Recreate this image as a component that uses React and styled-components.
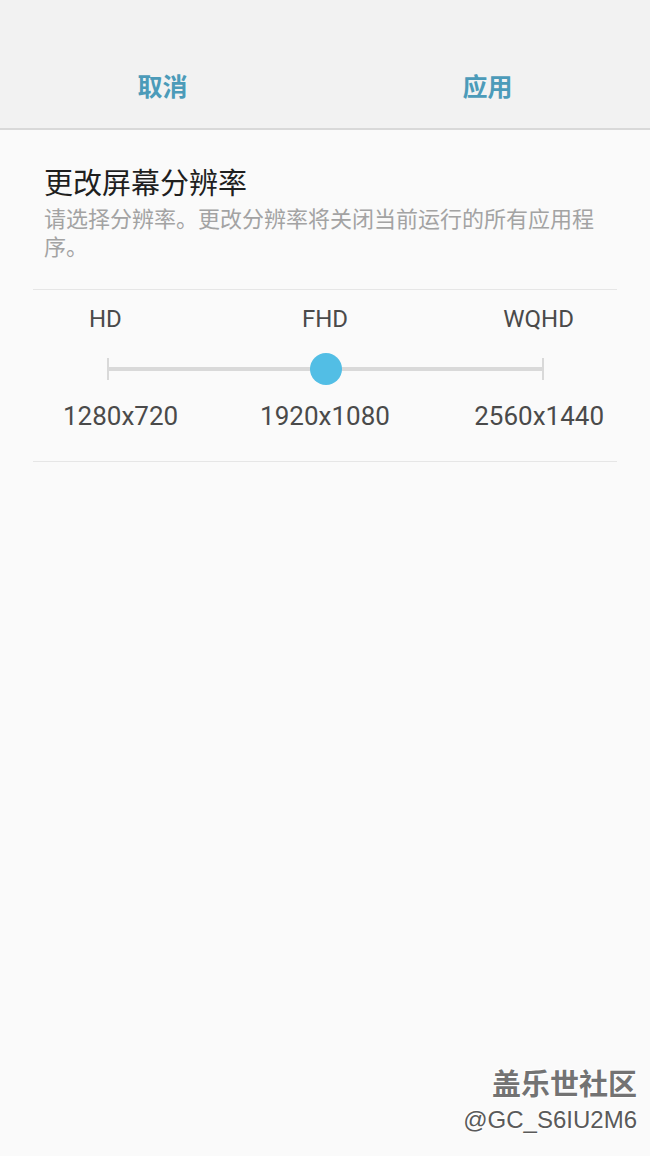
import React from 'react';
import styled, { createGlobalStyle } from 'styled-components';

const GlobalStyle = createGlobalStyle`
  html, body {
    margin: 0;
    padding: 0;
    background: #fafafa;
  }
  body {
    font-family: Roboto, "Noto Sans CJK SC", sans-serif;
  }
`;

const Page = styled.div`
  position: relative;
  width: 650px;
  min-height: 1156px;
  background: #fafafa;
  overflow: hidden;
`;

const TopBar = styled.div`
  display: grid;
  grid-template-columns: 1fr 1fr;
  align-items: end;
  height: 128px;
  background: #f2f2f2;
  border-bottom: 2px solid #d9d9d9;
`;

const BarButton = styled.button`
  border: none;
  background: none;
  padding: 0 0 28px;
  font-family: "Noto Sans CJK SC", sans-serif;
  font-size: 25px;
  font-weight: 700;
  line-height: 30px;
  color: #4c9bb9;
  cursor: pointer;
`;

const Header = styled.div`
  display: flex;
  flex-direction: column;
  padding: 34px 20px 30px 44px;
`;

const Title = styled.div`
  font-family: "Noto Sans CJK SC", sans-serif;
  font-size: 29px;
  line-height: 34px;
  color: #1f1f1f;
`;

const Subtitle = styled.div`
  margin-top: 5px;
  max-width: 565px;
  font-family: "Noto Sans CJK SC", sans-serif;
  font-size: 22px;
  line-height: 28px;
  color: #a3a3a3;
`;

const Section = styled.div`
  margin: 0 33px;
  padding: 14px 0 29px;
  border-top: 1px solid #e6e6e6;
  border-bottom: 1px solid #e6e6e6;
  display: flex;
  flex-direction: column;
`;

const Row = styled.div`
  display: grid;
  grid-template-columns: 1fr auto 1fr;
  align-items: center;
  margin-top: ${p => p.$top || 0}px;
`;

const Cell = styled.div`
  font-family: Roboto, sans-serif;
  font-size: ${p => p.$size}px;
  line-height: ${p => p.$lh}px;
  color: #4a4a4a;
  justify-self: ${p => p.$align};
  margin-left: ${p => p.$ml || 0}px;
  margin-right: ${p => p.$mr || 0}px;
`;

const SliderRow = styled.div`
  height: 40px;
  margin: 15px 73px 0 74px;
  display: flex;
  align-items: center;
`;

const Track = styled.div`
  position: relative;
  flex: 1;
  height: 4px;
  background: #d9d9d9;

  &::before,
  &::after {
    content: '';
    position: absolute;
    top: -9px;
    width: 2px;
    height: 22px;
    background: #d9d9d9;
  }
  &::before { left: 0; }
  &::after { right: 0; }
`;

const Thumb = styled.div`
  position: absolute;
  top: 50%;
  left: ${p => p.$pos}%;
  width: 32px;
  height: 32px;
  border-radius: 50%;
  background: #52bee5;
  transform: translate(-50%, -50%);
`;

const Watermark = styled.div`
  position: absolute;
  right: 13px;
  bottom: 18px;
  display: flex;
  flex-direction: column;
  align-items: flex-end;
  color: #5a5a5a;
  text-shadow: 1px 1px 0 #fff, -1px -1px 0 #fff;
`;

const MarkTitle = styled.div`
  font-family: "Noto Sans CJK SC", sans-serif;
  font-size: 29px;
  line-height: 36px;
  font-weight: 700;
  color: #737373;
`;

const MarkId = styled.div`
  font-family: "Liberation Sans", sans-serif;
  font-size: 24px;
  line-height: 36px;
  margin-top: 2px;
`;

const modes = [
  { name: 'HD', res: '1280x720' },
  { name: 'FHD', res: '1920x1080' },
  { name: 'WQHD', res: '2560x1440' },
];

export default function App() {
  const selected = 1;
  return (
    <Page>
      <GlobalStyle />
      <TopBar>
        <BarButton>取消</BarButton>
        <BarButton>应用</BarButton>
      </TopBar>
      <Header>
        <Title>更改屏幕分辨率</Title>
        <Subtitle>请选择分辨率。更改分辨率将关闭当前运行的所有应用程序。</Subtitle>
      </Header>
      <Section>
        <Row>
          <Cell $size={24} $lh={30} $align="start" $ml={56}>{modes[0].name}</Cell>
          <Cell $size={24} $lh={30} $align="center">{modes[1].name}</Cell>
          <Cell $size={24} $lh={30} $align="end" $mr={43}>{modes[2].name}</Cell>
        </Row>
        <SliderRow>
          <Track>
            <Thumb $pos={(selected / (modes.length - 1)) * 100} />
          </Track>
        </SliderRow>
        <Row $top={11}>
          <Cell $size={26} $lh={32} $align="start" $ml={30}>{modes[0].res}</Cell>
          <Cell $size={26} $lh={32} $align="center">{modes[1].res}</Cell>
          <Cell $size={26} $lh={32} $align="end" $mr={13}>{modes[2].res}</Cell>
        </Row>
      </Section>
      <Watermark>
        <MarkTitle>盖乐世社区</MarkTitle>
        <MarkId>@GC_S6IU2M6</MarkId>
      </Watermark>
    </Page>
  );
}
